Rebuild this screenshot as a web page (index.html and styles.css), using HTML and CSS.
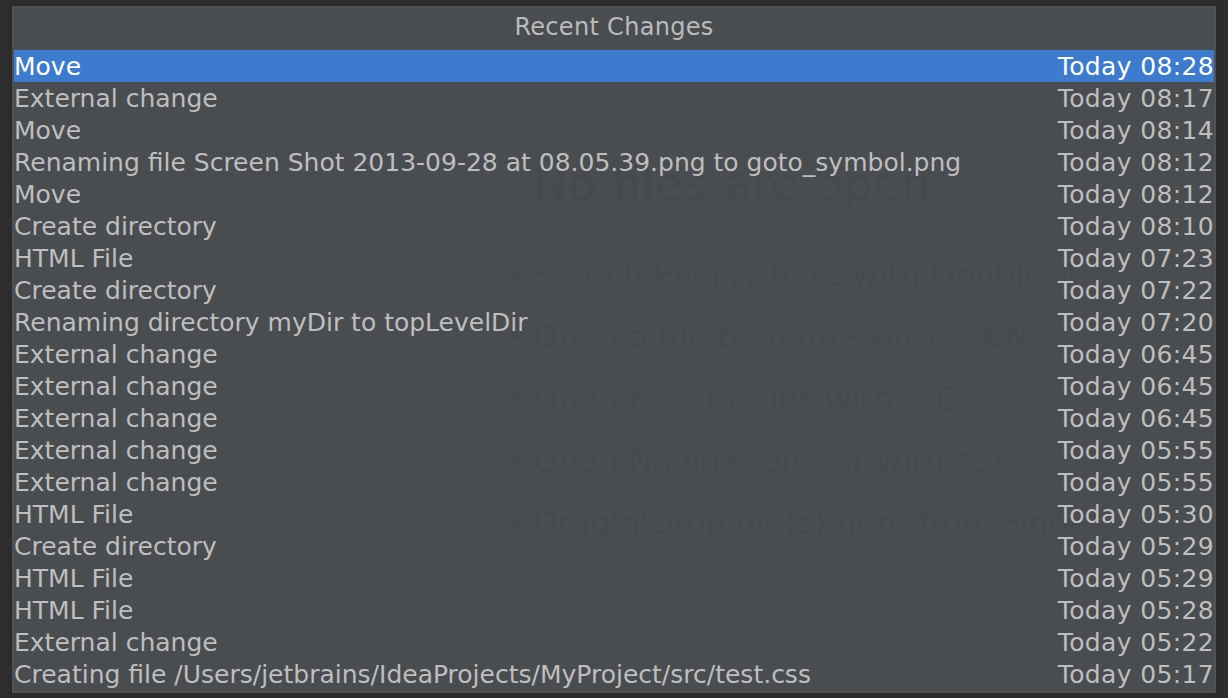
FILE: index.html
```html
<!DOCTYPE html>
<html>
<head>
<meta charset="utf-8">
<link rel="stylesheet" href="styles.css">
</head>
<body>
<div class="popup">
  <div class="backdrop">
    <div class="empty-title">No files are open</div>
    <div class="rule"></div>
    <ul class="hints">
      <li>Search Everywhere with Double ⇧</li>
      <li>Open a file by name with ⇧⌘N</li>
      <li>Open Recent files with ⌘E</li>
      <li>Open Navigation Bar with ⌥↖</li>
      <li>Drag'n'Drop file(s) here from Finder</li>
    </ul>
  </div>
  <div class="title">Recent Changes</div>
  <div class="list">
    <div class="row selected"><span class="name">Move</span><span class="time">Today 08:28</span></div>
    <div class="row"><span class="name">External change</span><span class="time">Today 08:17</span></div>
    <div class="row"><span class="name">Move</span><span class="time">Today 08:14</span></div>
    <div class="row"><span class="name">Renaming file Screen Shot 2013-09-28 at 08.05.39.png to goto_symbol.png</span><span class="time">Today 08:12</span></div>
    <div class="row"><span class="name">Move</span><span class="time">Today 08:12</span></div>
    <div class="row"><span class="name">Create directory</span><span class="time">Today 08:10</span></div>
    <div class="row"><span class="name">HTML File</span><span class="time">Today 07:23</span></div>
    <div class="row"><span class="name">Create directory</span><span class="time">Today 07:22</span></div>
    <div class="row"><span class="name">Renaming directory myDir to topLevelDir</span><span class="time">Today 07:20</span></div>
    <div class="row"><span class="name">External change</span><span class="time">Today 06:45</span></div>
    <div class="row"><span class="name">External change</span><span class="time">Today 06:45</span></div>
    <div class="row"><span class="name">External change</span><span class="time">Today 06:45</span></div>
    <div class="row"><span class="name">External change</span><span class="time">Today 05:55</span></div>
    <div class="row"><span class="name">External change</span><span class="time">Today 05:55</span></div>
    <div class="row"><span class="name">HTML File</span><span class="time">Today 05:30</span></div>
    <div class="row"><span class="name">Create directory</span><span class="time">Today 05:29</span></div>
    <div class="row"><span class="name">HTML File</span><span class="time">Today 05:29</span></div>
    <div class="row"><span class="name">HTML File</span><span class="time">Today 05:28</span></div>
    <div class="row"><span class="name">External change</span><span class="time">Today 05:22</span></div>
    <div class="row"><span class="name">Creating file /Users/jetbrains/IdeaProjects/MyProject/src/test.css</span><span class="time">Today 05:17</span></div>
  </div>
</div>
</body>
</html>
```

FILE: styles.css
```css
html, body {
  margin: 0;
  padding: 0;
  height: 100%;
}
body {
  background: #2c2c2c;
  background-image: repeating-linear-gradient(90deg, rgba(255,255,255,0.015) 0 1px, rgba(0,0,0,0.03) 1px 3px);
  font-family: "DejaVu Sans", "Verdana", sans-serif;
  padding: 6px 12px 0 12px;
  box-sizing: border-box;
}
.popup {
  position: relative;
  width: 1204px;
  height: 687px;
  box-sizing: border-box;
  border: 2px solid #4f5255;
  border-bottom-width: 3px;
  background: #4a4d50;
  display: flex;
  flex-direction: column;
  overflow: hidden;
}
.backdrop {
  position: absolute;
  left: 0;
  top: 0;
  right: 0;
  bottom: 0;
  z-index: 0;
  color: #474a4d;
  pointer-events: none;
}
.empty-title {
  position: absolute;
  left: 519px;
  top: 148px;
  font-size: 47px;
  white-space: nowrap;
}
.rule {
  position: absolute;
  left: 476px;
  top: 203px;
  width: 500px;
  height: 1px;
  background: #4d5053;
}
.hints {
  position: absolute;
  left: 491px;
  top: 236px;
  margin: 0;
  padding: 0;
  list-style: none;
  font-size: 32px;
  line-height: 62px;
  white-space: nowrap;
}
.hints li::before {
  content: "•";
  display: inline-block;
  width: 28px;
}
.title {
  position: relative;
  z-index: 1;
  height: 42px;
  line-height: 39px;
  text-align: center;
  color: #bbbbbb;
  font-size: 24px;
  letter-spacing: 0.3px;
}
.list {
  position: relative;
  z-index: 1;
  display: flex;
  flex-direction: column;
}
.row {
  height: 32px;
  line-height: 31px;
  display: flex;
  justify-content: space-between;
  color: #bebebe;
  font-size: 25px;
  white-space: nowrap;
  padding-top: 1px;
  box-sizing: border-box;
}
.row.selected {
  background: #3d7bcf;
  color: #ffffff;
}
.name {
  flex: 1;
  overflow: hidden;
}
.time {
  flex: none;
  letter-spacing: 0.35px;
}
```
